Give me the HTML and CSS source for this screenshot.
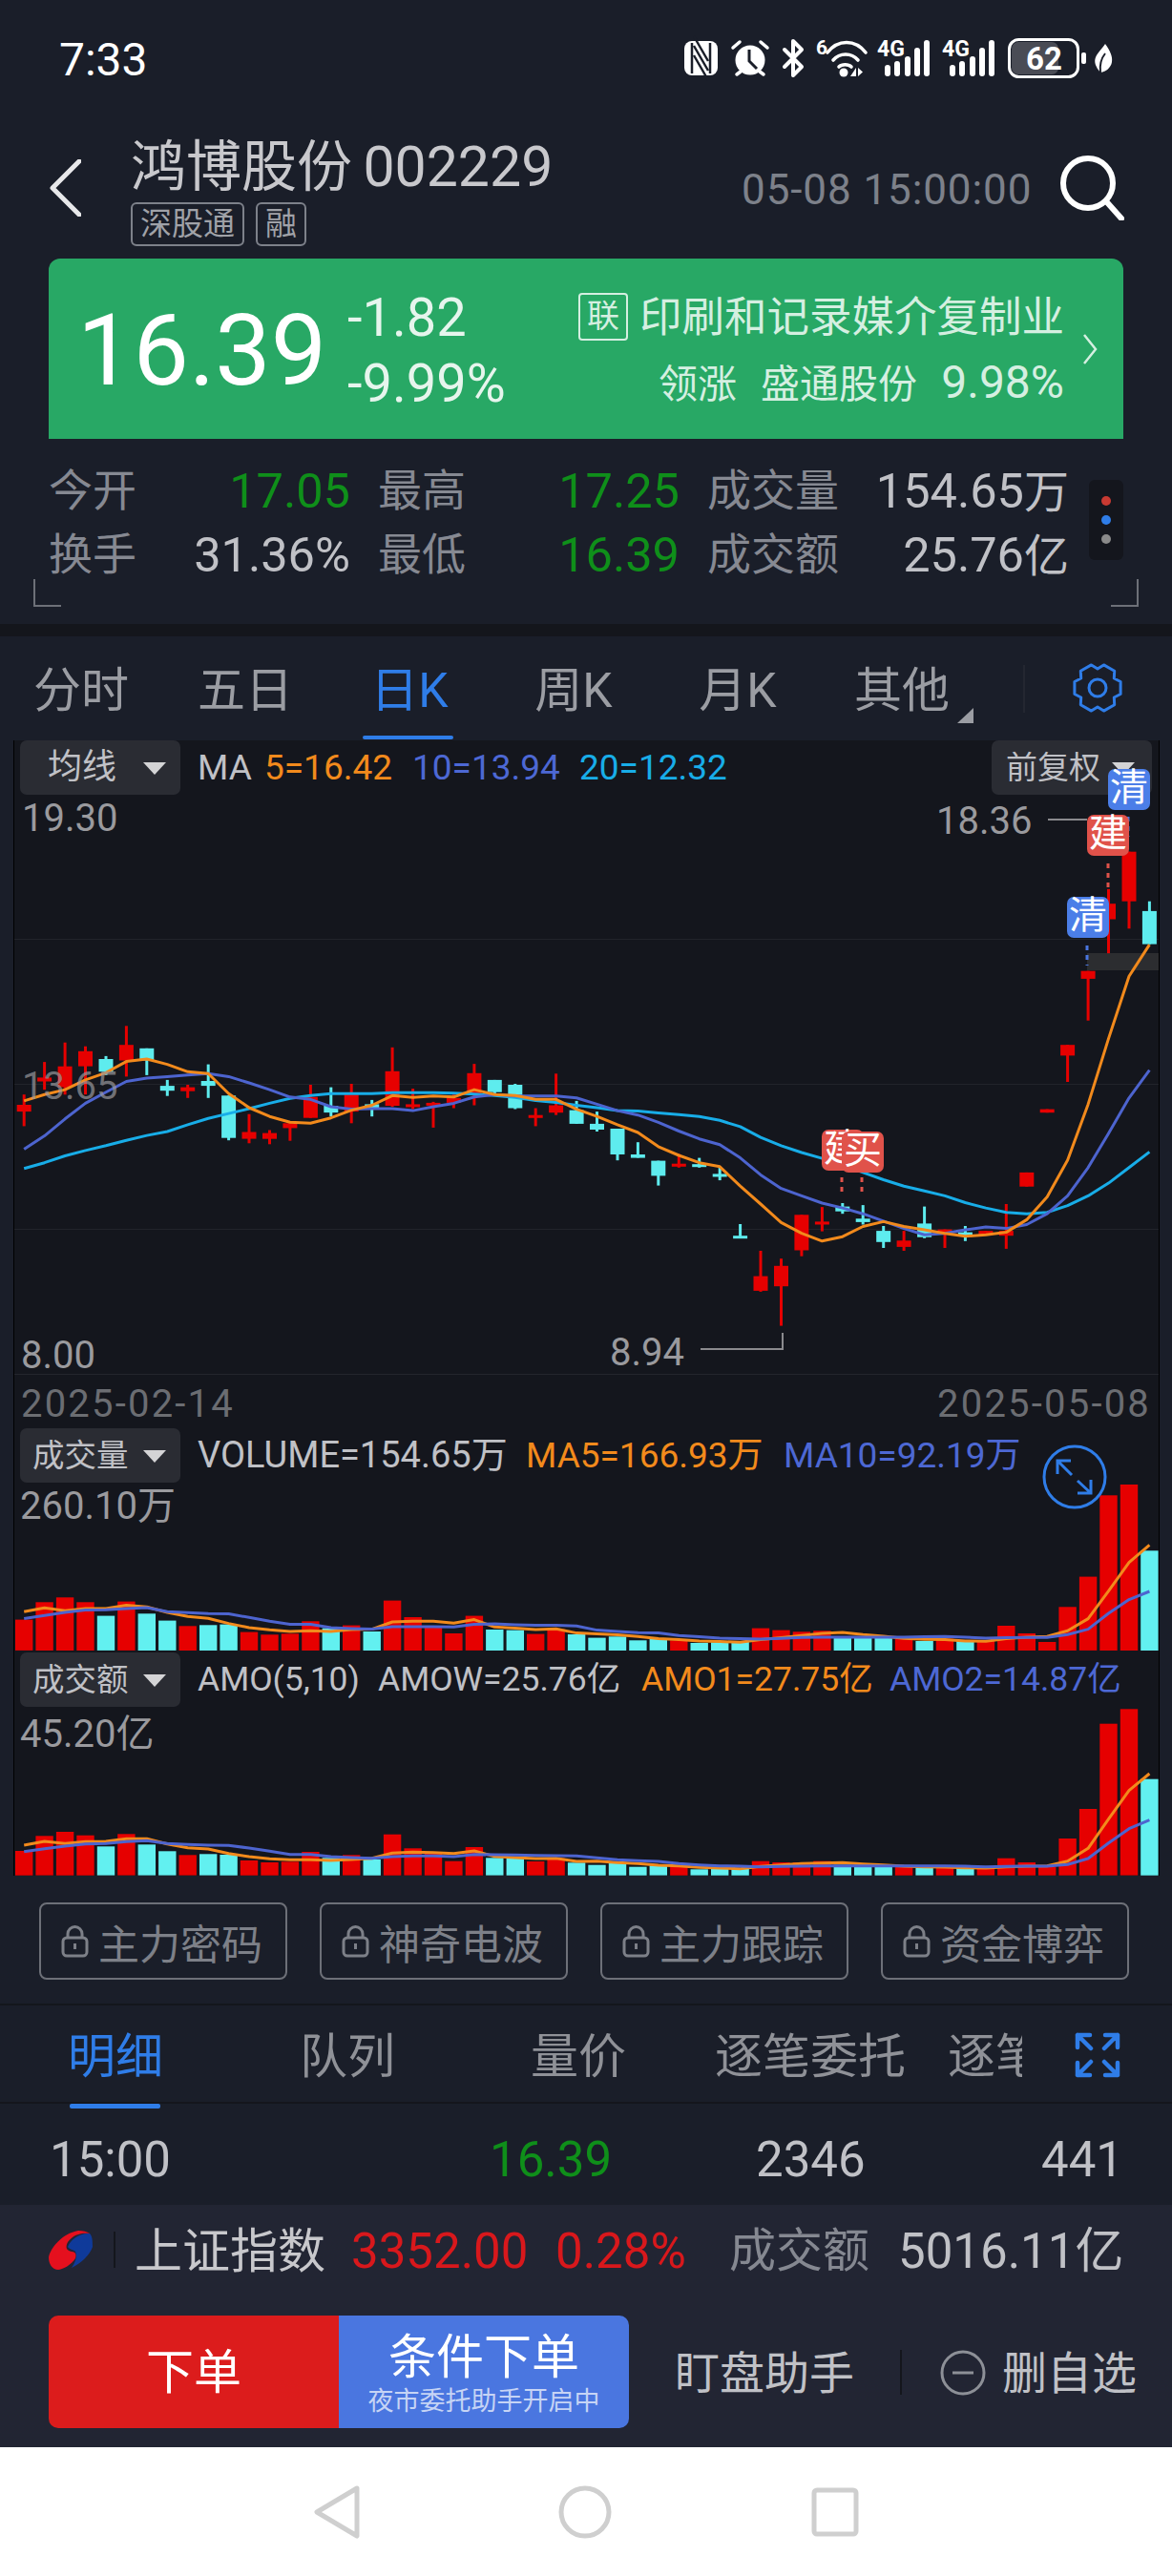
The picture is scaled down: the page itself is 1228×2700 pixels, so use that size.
FILE: index.html
```html
<!DOCTYPE html>
<html lang="zh-CN">
<head>
    <meta charset="UTF-8">
    <meta name="viewport" content="width=device-width, initial-scale=1.0">
    <title>鸿博股份 002229</title>
    <link rel="stylesheet" href="styles.css">
</head>
<body>
    <!-- Status bar -->
    <div class="statusbar">
        <span class="clock">7:33</span>
        <div class="status-icons">
            <svg class="ic-nfc" width="35" height="36" viewBox="0 0 35 36"><rect width="35" height="36" rx="8" fill="#fff"/><path d="M8 2v32M27 2v32" stroke="#1a1e29" stroke-width="2.5"/><path d="M10 5l15 26M10 15l15 26M10 -5l15 26" stroke="#1a1e29" stroke-width="2.5" fill="none"/></svg>
            <svg class="ic-alarm" width="40" height="40" viewBox="0 0 40 40"><circle cx="20" cy="22" r="15.5" fill="#fff"/><path d="M2 9l7-6M31 3l7 6M6 37l4-3M30 34l4 3" stroke="#fff" stroke-width="3.5" stroke-linecap="round"/><path d="M19 11v12l8 8" stroke="#1a1e29" stroke-width="3" fill="none"/></svg>
            <svg class="ic-bt" width="24" height="40" viewBox="0 0 24 40"><path d="M3 11l18 18-9 9V2l9 9L3 29" stroke="#fff" stroke-width="4" fill="none" stroke-linejoin="round" stroke-linecap="round"/></svg>
            <svg class="ic-wifi" width="52" height="40" viewBox="0 0 52 40"><text x="0" y="16" class="ic-text" font-size="21">6</text><path d="M12 14c11-14 29-14 40 0M18 22c7-8 19-8 26 0M24 29c3-3 10-3 13 0" stroke="#fff" stroke-width="3.6" fill="none" stroke-linecap="round"/><circle cx="29" cy="35" r="4.5" fill="#fff"/><path d="M42 30v9h-6zM44 30v9l5-4.500z" fill="#fff"/></svg>
            <svg class="ic-signal" width="56" height="40" viewBox="0 0 56 40"><text x="0" y="18" class="ic-text" font-size="23">4G</text><rect x="8" y="27" width="6" height="12" rx="3"/><rect x="18" y="23" width="6" height="16" rx="3"/><rect x="29" y="18" width="6" height="21" rx="3"/><rect x="39" y="9" width="6" height="30" rx="3"/><rect x="49" y="1" width="6" height="38" rx="3"/></svg>
            <svg class="ic-signal" width="56" height="40" viewBox="0 0 56 40"><text x="0" y="18" class="ic-text" font-size="23">4G</text><rect x="8" y="27" width="6" height="12" rx="3"/><rect x="18" y="23" width="6" height="16" rx="3"/><rect x="29" y="18" width="6" height="21" rx="3"/><rect x="39" y="9" width="6" height="30" rx="3"/><rect x="49" y="1" width="6" height="38" rx="3"/></svg>
            <svg class="ic-battery" width="82" height="42" viewBox="0 0 82 42"><rect x="4" y="4" width="49" height="34" rx="7" fill="#4a4c55"/><rect x="1.500" y="1.500" width="72" height="39" rx="10" fill="none" stroke="#fff" stroke-width="3"/><rect x="77" y="15" width="5" height="12" rx="2" fill="#fff"/><text x="38" y="33" text-anchor="middle" class="ic-text" font-size="33">62</text></svg>
            <svg class="ic-leaf" width="20" height="32" viewBox="0 0 20 32"><path d="M12 1c5 7 8 13 7 19-1 6-6 10-12 11C2 25 0 20 2 15 4 10 9 6 12 1z" fill="#fff"/><path d="M7 31c-1-8 1-15 5-20" stroke="#1a1e29" stroke-width="2" fill="none"/></svg>
        </div>
    </div>

    <!-- Stock title -->
    <div class="topbar">
        <svg class="back" width="34" height="60" viewBox="0 0 34 60"><path d="M32 2L4 30l28 28" stroke="#e8e8ea" stroke-width="5" fill="none" stroke-linecap="round" stroke-linejoin="round"/></svg>
        <div class="title-col">
            <div class="stock-name">鸿博股份 <span class="stock-code">002229</span></div>
            <div class="tags"><span class="tag">深股通</span><span class="tag">融</span></div>
        </div>
        <div class="quote-time">05-08 15:00:00</div>
        <svg class="search" width="70" height="68" viewBox="0 0 70 68"><circle cx="32" cy="29" r="26" stroke="#fff" stroke-width="6" fill="none"/><path d="M51 48l16 18" stroke="#fff" stroke-width="6" stroke-linecap="round"/></svg>
    </div>

    <!-- Price banner -->
    <div class="banner">
        <div class="big-price">16.39</div>
        <div class="change"><div>-1.82</div><div>-9.99%</div></div>
        <div class="sector">
            <div><span class="sector-tag">联</span>印刷和记录媒介复制业</div>
            <div class="sector-lead">领涨 盛通股份 <span class="lead-pct">9.98%</span></div>
        </div>
        <svg class="banner-arrow" width="16" height="32" viewBox="0 0 16 32"><path d="M2 1l12 15L2 31" stroke="#d5efe1" stroke-width="2.500" fill="none"/></svg>
    </div>

    <!-- Quote stats -->
    <div class="stats">
        <div class="stats-grid">
            <span class="st-label">今开</span><span class="st-val green">17.05</span>
            <span class="st-label">最高</span><span class="st-val green">17.25</span>
            <span class="st-label">成交量</span><span class="st-val">154.65<em>万</em></span>
            <span class="st-label">换手</span><span class="st-val">31.36%</span>
            <span class="st-label">最低</span><span class="st-val green">16.39</span>
            <span class="st-label">成交额</span><span class="st-val">25.76<em>亿</em></span>
        </div>
        <div class="dots"><i class="dot-red"></i><i class="dot-blue"></i><i class="dot-gray"></i></div>
        <span class="bracket bracket-l"></span>
        <span class="bracket bracket-r"></span>
    </div>
    <div class="strip"></div>

    <!-- Period tabs -->
    <div class="period-tabs">
        <span class="ptab">分时</span>
        <span class="ptab">五日</span>
        <span class="ptab active">日K</span>
        <span class="ptab">周K</span>
        <span class="ptab">月K</span>
        <span class="ptab more">其他</span>
        <span class="ptab-sep"></span>
        <svg class="gear" width="54" height="54" viewBox="0 0 54 54"><path d="M51.100 20.500L51.100 33.500 44.300 37 44.700 44.700 33.500 51.100 27 47 20.500 51.100 9.300 44.700 9.700 37 2.900 33.500 2.900 20.500 9.700 17 9.300 9.300 20.500 2.900 27 7 33.500 2.900 44.700 9.300 44.300 17Z" stroke="#2f7de8" stroke-width="3" fill="none" stroke-linejoin="round"/><circle cx="27" cy="27" r="9" stroke="#2f7de8" stroke-width="3" fill="none"/></svg>
    </div>

    <!-- K line charts -->
    <div class="charts">
        <section class="panel panel-k">
            <svg id="k-chart" class="plot"></svg>
            <div class="panel-head">
                <span class="select">均线</span>
                <span class="ind">MA</span>
                <span class="ind orange ind-k1">5=16.42</span>
                <span class="ind blue ind-k2">10=13.94</span>
                <span class="ind cyan ind-k3">20=12.32</span>
                <span class="select select-right">前复权</span>
            </div>
            <div id="k-marks"></div>
            <div class="dates"><span>2025-02-14</span><span>2025-05-08</span></div>
        </section>
        <section class="panel panel-vol">
            <svg id="vol-chart" class="plot"></svg>
            <div class="panel-head">
                <span class="select select-tall">成交量</span>
                <span class="ind ind-volume">VOLUME=154.65万</span>
                <span class="ind orange ind-v1">MA5=166.93万</span>
                <span class="ind blue ind-v2">MA10=92.19万</span>
            </div>
            <div class="axis-max">260.10万</div>
            <svg class="zoom-btn" width="68" height="68" viewBox="0 0 68 68"><circle cx="34" cy="34" r="32" stroke="#2f7de8" stroke-width="3" fill="none"/><path d="M16 17l15 15M37 38l14 13M16 31V17h14M51 37v14H37" stroke="#2f7de8" stroke-width="3" fill="none"/></svg>
        </section>
        <section class="panel panel-amo">
            <svg id="amo-chart" class="plot"></svg>
            <div class="panel-head">
                <span class="select select-tall">成交额</span>
                <span class="ind">AMO(5,10)</span>
                <span class="ind ind-a1">AMOW=25.76亿</span>
                <span class="ind orange ind-a2">AMO1=27.75亿</span>
                <span class="ind blue ind-a3">AMO2=14.87亿</span>
            </div>
            <div class="axis-max">45.20亿</div>
        </section>
    </div>

    <!-- Locked tools -->
    <div class="tools">
        <span class="tool"><svg width="31" height="34" viewBox="0 0 31 34"><use href="#lock"/></svg>主力密码</span>
        <span class="tool"><svg width="31" height="34" viewBox="0 0 31 34"><use href="#lock"/></svg>神奇电波</span>
        <span class="tool"><svg width="31" height="34" viewBox="0 0 31 34"><use href="#lock"/></svg>主力跟踪</span>
        <span class="tool"><svg width="31" height="34" viewBox="0 0 31 34"><use href="#lock"/></svg>资金博弈</span>
    </div>
    <svg class="defs"><defs><g id="lock" fill="none" stroke="#7d8088" stroke-width="3"><rect x="3" y="13" width="25" height="19" rx="4"/><path d="M8 13V9a7.500 7.500 0 0 1 15 0v4"/><path d="M15.500 19v6"/></g></defs></svg>

    <!-- Trade detail -->
    <div class="detail-tabs">
        <span class="dtab active">明细</span>
        <span class="dtab dtab-2">队列</span>
        <span class="dtab dtab-3">量价</span>
        <span class="dtab dtab-4">逐笔委托</span>
        <span class="dtab dtab-5">逐笔</span>
        <svg class="fullscreen" width="48" height="48" viewBox="0 0 48 48"><path d="M3 16V3h13M3 3l14 14M32 3h13v13M45 3L31 17M3 32v13h13M3 45l14-14M45 32v13H32M45 45L31 31" stroke="#2f7de8" stroke-width="4.500" fill="none" stroke-linecap="round" stroke-linejoin="round"/></svg>
    </div>
    <div class="tick-row">
        <span class="tick-time">15:00</span>
        <span class="tick-price green">16.39</span>
        <span class="tick-vol">2346</span>
        <span class="tick-num">441</span>
    </div>

    <!-- Index bar and order buttons -->
    <div class="bottom">
        <div class="index-bar">
            <svg class="index-logo" width="46" height="41" viewBox="0 0 46 41"><path d="M20 17C23 9 33 2 43 3 46 6 46 12 46 17 43 26 34 34 24 39 28 33 30 28 28 22 26 20 22 20 20 17Z" fill="#0f3a9a"/><path d="M0 28C2 18 14 3 31 0 36 0 40 1 43 3 34 2 26 4 20 12 17 18 19 21 24 22 29 22 29 26 28 29 24 36 14 41 10 41 4 41 0 35 0 28Z" fill="#e5101e"/></svg>
            <span class="index-sep"></span>
            <span class="index-name">上证指数</span>
            <span class="index-val">3352.00</span>
            <span class="index-pct">0.28%</span>
            <span class="index-label">成交额</span>
            <span class="index-amt">5016.11亿</span>
        </div>
        <div class="order-bar">
            <div class="order-btns">
                <span class="btn-red">下单</span>
                <div class="btn-blue"><span>条件下单</span><small>夜市委托助手开启中</small></div>
            </div>
            <span class="watch">盯盘助手</span>
            <span class="order-sep"></span>
            <svg class="minus" width="48" height="48" viewBox="0 0 48 48"><circle cx="24" cy="24" r="22" stroke="#8d9097" stroke-width="3" fill="none"/><path d="M13 24h22" stroke="#8d9097" stroke-width="3"/></svg>
            <span class="remove">删自选</span>
        </div>
    </div>

    <!-- Android nav -->
    <div class="navbar">
        <svg width="48" height="56" viewBox="0 0 48 56"><path d="M45 3L3 28l42 25z" stroke="#cfcfcf" stroke-width="5" fill="none" stroke-linejoin="round"/></svg>
        <svg width="56" height="56" viewBox="0 0 56 56"><circle cx="28" cy="28" r="25" stroke="#cfcfcf" stroke-width="5" fill="none"/></svg>
        <svg width="50" height="52" viewBox="0 0 50 52"><rect x="3" y="3" width="44" height="46" rx="3" stroke="#cfcfcf" stroke-width="5" fill="none"/></svg>
    </div>

    <script src="app.js"></script>
</body>
</html>
```
FILE: styles.css
```css
/* General */
body {
    margin: 0;
    width: 1228px;
    height: 2700px;
    overflow: hidden;
    background: #1a1e29;
    color: #c8c8cc;
    font-family: Roboto, "Noto Sans CJK SC", sans-serif;
}

.green { color: #0f8f1a; }
.orange { color: #f28a1c; }
.blue { color: #4d68d4; }
.cyan { color: #18ade8; }

/* Status bar */
.statusbar {
    height: 126px;
    display: flex;
    align-items: center;
    justify-content: space-between;
    padding: 0 62px;
    box-sizing: border-box;
}

.clock {
    font-size: 48px;
    line-height: 56px;
    color: #fff;
}

.status-icons {
    display: flex;
    align-items: center;
    margin-bottom: 5px;
}

.status-icons svg { overflow: visible; }
.status-icons .ic-alarm { margin-left: 14px; }
.status-icons .ic-bt { margin-left: 13px; }
.status-icons .ic-wifi { margin-left: 12px; }
.status-icons .ic-signal { margin-left: 12px; }
.status-icons .ic-battery { margin-left: 13px; }
.status-icons .ic-leaf { margin-left: 8px; }
.ic-signal rect { fill: #fff; }
.ic-text { fill: #fff; font-family: Roboto, sans-serif; font-weight: 700; }

/* Title */
.topbar {
    height: 145px;
    position: relative;
    display: flex;
    padding-left: 51px;
    box-sizing: border-box;
}

.back { margin-top: 41px; }

.title-col {
    margin-left: 52px;
    padding-top: 18px;
}

.stock-name {
    font-size: 58px;
    line-height: 62px;
    color: #c8c8cc;
    white-space: nowrap;
}

.stock-code {
    font-size: 59px;
    margin-left: -3px;
}

.tags {
    display: flex;
    gap: 12px;
    margin-top: 6px;
}

.tag {
    box-sizing: border-box;
    height: 46px;
    padding: 0 8px;
    border: 2px solid #7d818a;
    border-radius: 6px;
    font-size: 33px;
    line-height: 42px;
    color: #a0a2a8;
}

.quote-time {
    position: absolute;
    left: 777px;
    top: 50px;
    font-size: 44px;
    line-height: 46px;
    color: #7d818a;
    letter-spacing: 0.9px;
    white-space: nowrap;
}

.search {
    position: absolute;
    left: 1108px;
    top: 37px;
}

/* Banner */
.banner {
    height: 189px;
    margin: 0 51px;
    padding-left: 30px;
    box-sizing: border-box;
    display: flex;
    align-items: center;
    position: relative;
    background: #28a865;
    border-radius: 12px 12px 0 0;
    color: #fff;
}

.big-price {
    width: 283px;
    font-size: 104px;
    line-height: 110px;
    margin-top: 4px;
}

.change {
    font-size: 56px;
    line-height: 69px;
    color: #e6f5ed;
    margin-top: 5px;
}

.sector {
    position: absolute;
    right: 62px;
    top: 28px;
    text-align: right;
    font-size: 44.500px;
    line-height: 68px;
    color: #d5efe1;
    white-space: nowrap;
}

.sector-lead {
    font-size: 41px;
    word-spacing: 15px;
}

.lead-pct { font-size: 48px; }

.sector-tag {
    display: inline-block;
    box-sizing: border-box;
    width: 52px;
    height: 50px;
    margin-right: 12px;
    border: 2px solid #d5efe1;
    border-radius: 4px;
    font-size: 34px;
    line-height: 45px;
    text-align: center;
    vertical-align: 5px;
}

.banner-arrow {
    position: absolute;
    left: 1083px;
    top: 79px;
}

/* Stats */
.stats {
    height: 194px;
    position: relative;
    padding: 21px 0 0 51px;
    box-sizing: border-box;
}

.stats-grid {
    display: grid;
    grid-template-columns: 91px 196px 92px 195px 140px 210px;
    column-gap: 29px;
    grid-auto-rows: 67px;
    align-items: center;
    font-size: 46px;
    line-height: 67px;
}

.st-label { color: #868992; white-space: nowrap; }

.st-val {
    text-align: right;
    color: #c0c1c6;
    font-size: 50.500px;
    white-space: nowrap;
}

.st-val em {
    font-style: normal;
    font-size: 47px;
}

.st-val.green { color: #0f8f1a; }

.dots {
    position: absolute;
    left: 1141px;
    top: 43px;
    width: 36px;
    height: 84px;
    border-radius: 6px;
    background: #14161d;
}

.dots i {
    position: absolute;
    left: 13px;
    width: 10px;
    height: 10px;
    border-radius: 50%;
}

.dot-red { top: 17px; background: #c83a32; }
.dot-blue { top: 37px; background: #2f7de8; }
.dot-gray { top: 57px; background: #8a8a8a; }

.bracket {
    position: absolute;
    top: 147px;
    width: 27px;
    height: 27px;
    border-bottom: 2px solid #6d7078;
}

.bracket-l { left: 35px; border-left: 2px solid #6d7078; }
.bracket-r { left: 1164px; border-right: 2px solid #6d7078; }

.strip {
    height: 13px;
    background: #14161c;
}

/* Period tabs */
.period-tabs {
    height: 109px;
    display: flex;
    position: relative;
}

.ptab {
    width: 172px;
    margin-left: -1px;
    margin-right: 1px;
    text-align: center;
    font-size: 50px;
    line-height: 114px;
    color: #9b9da3;
    position: relative;
}

.ptab.active { color: #2f7de8; }

.ptab.active::after {
    content: "";
    position: absolute;
    left: 37px;
    bottom: 1px;
    width: 95px;
    height: 4px;
    border-radius: 2px;
    background: #2f7de8;
}

.ptab.more::after {
    content: "";
    position: absolute;
    right: 11px;
    bottom: 18px;
    border-style: solid;
    border-width: 0 0 16px 17px;
    border-color: transparent transparent #9b9da3 transparent;
}

.ptab-sep {
    position: absolute;
    left: 1072px;
    top: 30px;
    height: 50px;
    border-left: 2px solid #242731;
}

.gear {
    position: absolute;
    left: 1123px;
    top: 27px;
}

/* Charts */
.charts {
    margin-left: 14px;
    width: 1201px;
    background: #14161d;
    border-left: 1px solid #000;
    border-right: 1px solid #000;
    box-sizing: border-box;
}

.panel {
    position: relative;
    box-sizing: border-box;
}

.panel-k { height: 721px; }
.panel-vol { height: 235px; }
.panel-amo { height: 234px; }

.plot {
    position: absolute;
    left: 0;
    top: 0;
    width: 1199px;
    height: 100%;
}

.panel-head {
    position: relative;
    height: 57px;
    font-size: 37px;
    line-height: 57px;
    white-space: nowrap;
}

.select {
    position: absolute;
    left: 6px;
    top: 0;
    width: 168px;
    height: 57px;
    box-sizing: border-box;
    padding-left: 29px;
    border-radius: 7px;
    background: #2a2c33;
    color: #c0c1c6;
    font-size: 36px;
}

.select::after {
    content: "";
    position: absolute;
    left: 129px;
    top: 23px;
    border-style: solid;
    border-width: 13px 12.500px 0;
    border-color: #d4d4d6 transparent transparent;
}

.select-tall { padding-left: 13px; font-size: 33.500px; }

.select-right {
    left: 1024px;
    padding-left: 15px;
    font-size: 33px;
}

.select-right::after { left: 126px; }

.ind {
    position: absolute;
    left: 192px;
    top: 0;
    color: #c0c1c6;
}

.ind-k1 { left: 262px; color: #f28a1c; }
.ind-k2 { left: 417px; color: #4d68d4; }
.ind-k3 { left: 592px; color: #18ade8; }
.ind-v1 { left: 536px; color: #f28a1c; }
.ind-v2 { left: 806px; color: #4d68d4; }
.ind-a1 { left: 381px; }
.ind-a2 { left: 657px; color: #f28a1c; }
.ind-a3 { left: 917px; color: #4d68d4; }

.panel-vol .ind { font-size: 37px; }
.panel-vol .ind-volume { font-size: 38px; }
.panel-amo .ind { font-size: 35.500px; }

.axis-max {
    position: relative;
    padding-left: 6px;
    font-size: 40px;
    line-height: 50px;
    color: #9a9a9e;
}

.panel-amo .axis-max { margin-top: 4px; }

.dates {
    position: absolute;
    left: 0;
    right: 0;
    top: 664px;
    height: 57px;
    padding: 0 8px 0 7px;
    display: flex;
    justify-content: space-between;
    font-size: 40px;
    letter-spacing: 2.200px;
    line-height: 62px;
    color: #6b6d72;
    border-top: 1px solid #23252c;
    box-sizing: border-box;
}

.mark {
    position: absolute;
    width: 44px;
    height: 43px;
    border-radius: 7px;
    font-size: 40px;
    line-height: 40px;
    text-align: center;
    color: #fff;
}

.mark-sell { background: #4b7ee8; }
.mark-buy { background: #e0524a; }

.zoom-btn {
    position: absolute;
    left: 1077px;
    top: 17px;
}

.plot text {
    font-family: Roboto, sans-serif;
    font-size: 40px;
    fill: #9a9a9e;
}

/* Locked tools */
.tools {
    height: 136px;
    padding: 28px 45px 0 41px;
    box-sizing: border-box;
    display: flex;
    justify-content: space-between;
    border-bottom: 2px solid #14161c;
}

.tool {
    box-sizing: border-box;
    width: 260px;
    height: 81px;
    display: flex;
    align-items: center;
    gap: 9px;
    padding-left: 20px;
    border: 2px solid #6d7078;
    border-radius: 8px;
    font-size: 43px;
    color: #7d8088;
    white-space: nowrap;
}

.defs {
    position: absolute;
    width: 0;
    height: 0;
}

/* Detail tabs */
.detail-tabs {
    height: 103px;
    position: relative;
    font-size: 50px;
    line-height: 108px;
    color: #8f9197;
    border-bottom: 2px solid #14161c;
    box-sizing: border-box;
}

.dtab { position: absolute; left: 71px; top: 0; white-space: nowrap; }
.dtab.active { color: #2f7de8; }

.dtab.active::after {
    content: "";
    position: absolute;
    left: 2px;
    bottom: 0;
    width: 95px;
    height: 5px;
    border-radius: 2px;
    background: #2f7de8;
}

.dtab-2 { left: 314px; }
.dtab-3 { left: 556px; }
.dtab-4 { left: 749px; }
.dtab-5 { left: 993px; width: 78px; overflow: hidden; }

.fullscreen {
    position: absolute;
    left: 1126px;
    top: 28px;
}

.tick-row {
    height: 106px;
    position: relative;
    font-size: 51px;
    line-height: 118px;
    color: #c0c1c6;
}

.tick-row span { position: absolute; top: 0; }
.tick-time { left: 52px; }
.tick-price { left: 513px; }
.tick-vol { left: 792px; }
.tick-num { left: 1091px; }
.tick-row .green { color: #0f8f1a; }

/* Bottom */
.bottom {
    height: 254px;
    background: #222533;
}

.index-bar {
    height: 116px;
    position: relative;
    font-size: 50px;
    line-height: 98px;
    white-space: nowrap;
}

.index-bar span { position: absolute; top: 0; }

.index-logo {
    position: absolute;
    left: 51px;
    top: 27px;
}

.index-bar .index-sep {
    left: 119px;
    top: 28px;
    height: 38px;
    border-left: 2px solid #14161c;
}

.index-name { left: 141px; color: #c8c8cc; }
.index-val { left: 368px; color: #d8181c; font-size: 51px; }
.index-pct { left: 582px; color: #d8181c; font-size: 51px; }
.index-label { left: 764px; color: #858891; font-size: 49px; }
.index-amt { left: 941px; color: #c0c1c6; font-size: 51px; }

.order-bar {
    position: relative;
    height: 138px;
    white-space: nowrap;
}

.order-btns {
    position: absolute;
    left: 51px;
    top: 0;
    display: flex;
    width: 608px;
    height: 118px;
    border-radius: 10px;
    overflow: hidden;
}

.btn-red {
    width: 304px;
    background: #dc1c1c;
    color: #fff;
    font-size: 50px;
    line-height: 120px;
    text-align: center;
}

.btn-blue {
    width: 304px;
    background: #4a76e0;
    color: #fff;
    text-align: center;
    padding-top: 14px;
    box-sizing: border-box;
    font-size: 50px;
    line-height: 60px;
}

.btn-blue span { display: block; }

.btn-blue small {
    display: block;
    font-size: 27px;
    line-height: 33px;
    color: #c6d4f5;
}

.watch, .remove {
    position: absolute;
    top: 0;
    font-size: 47px;
    line-height: 122px;
    color: #c0c1c6;
}

.watch { left: 707px; }
.remove { left: 1050px; }

.order-sep {
    position: absolute;
    left: 943px;
    top: 36px;
    height: 47px;
    border-left: 2px solid #14161c;
}

.minus {
    position: absolute;
    left: 985px;
    top: 36px;
}

/* Nav */
.navbar {
    position: relative;
    height: 135px;
    background: #fff;
    display: flex;
    align-items: center;
    padding-left: 329px;
    box-sizing: border-box;
    gap: 208px;
}

.navbar svg:nth-child(3) { margin-left: 1px; }
```
FILE: app.js
```js
// Values are read in plot units, the scale functions below turn them into px
const XS = 21.44;
const X0 = 10.2;
const RED = '#e60000';
const CYAN = '#5eecee';

// [up, high, top, bottom, low]
const CANDLES = [
    [1, 955, 976, 990, 1020], [1, 888, 920, 928, 945], [1, 848, 897, 940, 955], [1, 856, 866, 897, 955],
    [0, 876, 882, 908, 915], [1, 814, 853, 885, 918], [0, 860, 860, 885, 915], [0, 925, 937, 947, 958],
    [1, 935, 940, 948, 962], [0, 893, 927, 937, 962], [0, 957, 957, 1044, 1049], [1, 995, 1032, 1046, 1055],
    [1, 1028, 1034, 1046, 1057], [1, 1012, 1014, 1024, 1050], [1, 935, 960, 1003, 1003], [0, 940, 978, 992, 1000],
    [1, 933, 955, 990, 1014], [0, 966, 975, 985, 1000], [1, 858, 907, 978, 980], [1, 943, 975, 981, 985],
    [1, 970, 972, 976, 1023], [1, 955, 962, 972, 983], [1, 892, 911, 955, 977], [0, 925, 925, 950, 953],
    [0, 933, 935, 983, 985], [1, 983, 997, 1003, 1020], [1, 912, 977, 992, 997], [0, 968, 987, 1015, 1015],
    [0, 990, 1015, 1027, 1031], [0, 1025, 1025, 1078, 1090], [0, 1053, 1078, 1085, 1085], [0, 1091, 1091, 1122, 1142],
    [1, 1077, 1097, 1103, 1105], [0, 1085, 1098, 1103, 1105], [0, 1105, 1118, 1124, 1131], [0, 1221, 1245, 1250, 1250],
    [1, 1276, 1328, 1358, 1360], [1, 1292, 1307, 1349, 1430], [1, 1202, 1202, 1275, 1287], [1, 1186, 1216, 1222, 1236],
    [0, 1178, 1185, 1195, 1200], [0, 1182, 1210, 1217, 1222], [0, 1225, 1235, 1258, 1270], [1, 1235, 1255, 1268, 1276],
    [0, 1185, 1220, 1248, 1250], [1, 1232, 1232, 1240, 1270], [0, 1225, 1238, 1245, 1256], [1, 1235, 1235, 1243, 1243],
    [1, 1180, 1235, 1245, 1272], [1, 1115, 1115, 1144, 1144], [1, 985, 985, 992, 992], [1, 853, 853, 875, 929],
    [1, 701, 701, 717, 803], [1, 533, 563, 595, 665], [1, 456, 456, 558, 614], [0, 558, 578, 646, 646]
];

const MA5 = [968, 955, 945, 925, 910, 887, 882, 893, 908, 912, 953, 982, 1000, 1012, 1014, 1003, 987, 977, 957, 961, 958, 960, 945, 955, 957, 965, 965, 985,
    1000, 1017, 1033, 1062, 1080, 1095, 1103, 1143, 1180, 1218, 1240, 1256, 1247, 1226, 1216, 1226, 1233, 1240, 1246, 1243, 1238, 1212, 1165, 1090, 975, 840, 712, 647];
const MA10 = [1067, 1040, 1005, 973, 950, 928, 921, 918, 915, 912, 918, 931, 945, 960, 965, 980, 985, 984, 984, 988, 980, 973, 960, 955, 958, 958, 958, 962,
    975, 988, 997, 1012, 1030, 1046, 1058, 1085, 1120, 1148, 1163, 1178, 1188, 1200, 1215, 1230, 1243, 1240, 1233, 1227, 1230, 1222, 1200, 1163, 1105, 1035, 962, 905];
const MA20 = [1107, 1095, 1081, 1070, 1060, 1049, 1039, 1031, 1017, 1004, 994, 984, 973, 963, 957, 953, 953, 953, 951, 951, 951, 952, 954, 957, 961, 967, 971, 977,
    982, 988, 989, 993, 996, 1000, 1008, 1021, 1043, 1060, 1074, 1086, 1100, 1115, 1130, 1143, 1153, 1163, 1177, 1188, 1197, 1200, 1197, 1183, 1163, 1137, 1105, 1073];

const UP = CANDLES.map(c => c[0]);

const VOL = [715, 660, 645, 660, 703, 658, 696, 718, 735, 732, 730, 754, 762, 759, 720, 742, 733, 752, 655, 707, 735, 758, 703, 746, 748, 760, 745, 761,
    772, 768, 780, 775, 780, 788, 786, 784, 742, 748, 753, 750, 770, 773, 770, 775, 782, 775, 782, 782, 734, 758, 785, 675, 580, 324, 290, 498];
const VOL_MA5 = [690, 678, 687, 680, 680, 670, 675, 692, 705, 711, 727, 740, 747, 752, 750, 752, 746, 745, 722, 720, 720, 726, 715, 738, 742, 746, 744, 757,
    760, 763, 768, 775, 778, 782, 784, 786, 778, 772, 765, 758, 755, 762, 767, 774, 777, 778, 782, 783, 775, 770, 768, 750, 712, 625, 535, 480];
const VOL_MA10 = [712, 702, 692, 685, 684, 680, 677, 690, 693, 696, 697, 708, 720, 730, 730, 740, 743, 745, 737, 737, 737, 738, 730, 728, 731, 733, 733, 735,
    748, 752, 756, 757, 765, 769, 773, 775, 776, 774, 771, 770, 770, 770, 770, 770, 769, 768, 770, 773, 772, 771, 771, 762, 745, 695, 652, 626];

const AMO = [1440, 1393, 1380, 1391, 1426, 1387, 1420, 1441, 1453, 1450, 1452, 1470, 1476, 1474, 1443, 1462, 1453, 1467, 1388, 1432, 1445, 1472, 1428, 1462, 1464, 1473, 1463, 1477,
    1484, 1478, 1490, 1486, 1490, 1498, 1497, 1496, 1472, 1476, 1476, 1472, 1484, 1484, 1484, 1490, 1492, 1488, 1492, 1492, 1463, 1476, 1490, 1401, 1308, 1040, 994, 1214];
const AMO_MA5 = [1422, 1410, 1417, 1411, 1410, 1402, 1402, 1418, 1430, 1434, 1448, 1458, 1465, 1468, 1468, 1470, 1467, 1463, 1447, 1444, 1445, 1448, 1440, 1457, 1461, 1464, 1463, 1473,
    1472, 1477, 1480, 1485, 1487, 1492, 1494, 1496, 1489, 1484, 1480, 1478, 1477, 1481, 1484, 1488, 1490, 1491, 1493, 1494, 1490, 1488, 1487, 1472, 1432, 1340, 1250, 1197];
const AMO_MA10 = [1442, 1433, 1425, 1418, 1417, 1411, 1408, 1417, 1420, 1422, 1423, 1431, 1441, 1451, 1451, 1458, 1461, 1463, 1458, 1456, 1456, 1458, 1451, 1452, 1453, 1454, 1455, 1456,
    1462, 1468, 1471, 1473, 1480, 1484, 1487, 1488, 1490, 1489, 1488, 1487, 1487, 1487, 1487, 1487, 1487, 1487, 1488, 1490, 1489, 1488, 1488, 1483, 1464, 1415, 1370, 1343];

const px = i => X0 + i * XS;
const fmt = n => n.toFixed(1);

function linePath(values, scale, color, width) {
    const pts = values.map((v, i) => `${fmt(px(i))},${fmt(scale(v))}`).join(' ');
    return `<polyline points="${pts}" fill="none" stroke="${color}" stroke-width="${width}" stroke-linejoin="round"/>`;
}

function rect(x, y, w, h, fill) {
    return `<rect x="${fmt(x)}" y="${fmt(y)}" width="${fmt(w)}" height="${fmt(h)}" fill="${fill}"/>`;
}

function dotted(x, y1, y2, color) {
    return `<path d="M${x} ${y1}V${y2}" stroke="${color}" stroke-width="3" stroke-dasharray="5 5"/>`;
}

function drawKChart() {
    const ky = v => v / 1.96 - 116;
    let s = '';

    [208, 360, 512].forEach(y => { s += rect(0, y, 1199, 1, '#22242b'); });
    s += rect(1124, 223, 75, 18, '#2c2d30');

    CANDLES.forEach((c, i) => {
        const color = c[0] ? RED : CYAN;
        const x = px(i);
        s += rect(x - 1.5, ky(c[1]), 3, ky(c[4]) - ky(c[1]), color);
        s += rect(x - 7.5, ky(c[2]), 15, Math.max(ky(c[3]) - ky(c[2]), 3), color);
    });

    s += linePath(MA20, ky, '#18ade8', 3);
    s += linePath(MA10, ky, '#4d64cf', 3);
    s += linePath(MA5, ky, '#f28a1c', 3);

    s += dotted(1146, 129, 154, '#e0524a');
    s += dotted(1124, 215, 236, '#4a76e0');
    s += dotted(1167, 80, 101, '#4a76e0');
    s += dotted(867, 458, 478, '#e0524a');
    s += dotted(888, 458, 478, '#e0524a');

    s += `<path d="M1083 83h41M719 638h86v-17" fill="none" stroke="#8a8a8e" stroke-width="2"/>`;
    s += `<text x="8" y="95">19.30</text>`;
    s += `<text x="8" y="376" fill-opacity="0.7">13.65</text>`;
    s += `<text x="7" y="658">8.00</text>`;
    s += `<text x="966" y="98">18.36</text>`;
    s += `<text x="624" y="655">8.94</text>`;

    document.getElementById('k-chart').innerHTML = s;

    // trade marks sit on top of the candles
    const marks = [
        ['清', 'sell', 1146, 30], ['建', 'buy', 1124, 78], ['清', 'sell', 1103, 164],
        ['建', 'buy', 846, 408], ['买', 'buy', 867, 410]
    ];
    document.getElementById('k-marks').innerHTML = marks.map(m =>
        `<span class="mark mark-${m[1]}" style="left:${m[2]}px;top:${m[3]}px">${m[0]}</span>`).join('');
}

function drawBars(id, bars, ma5, ma10, bottom, offset) {
    const y = v => v / 3 - offset;
    let s = '';
    bars.forEach((v, i) => {
        s += rect(px(i) - 9.2, y(v), 18.4, y(bottom) - y(v), UP[i] ? RED : '#62f0f0');
    });
    s += linePath(ma5, y, '#f28a1c', 3);
    s += linePath(ma10, y, '#4d64cf', 3);
    document.getElementById(id).innerHTML = s;
}

drawKChart();
drawBars('vol-chart', VOL, VOL_MA5, VOL_MA10, 812, 37.7);
drawBars('amo-chart', AMO, AMO_MA5, AMO_MA10, 1517, 272);
```
